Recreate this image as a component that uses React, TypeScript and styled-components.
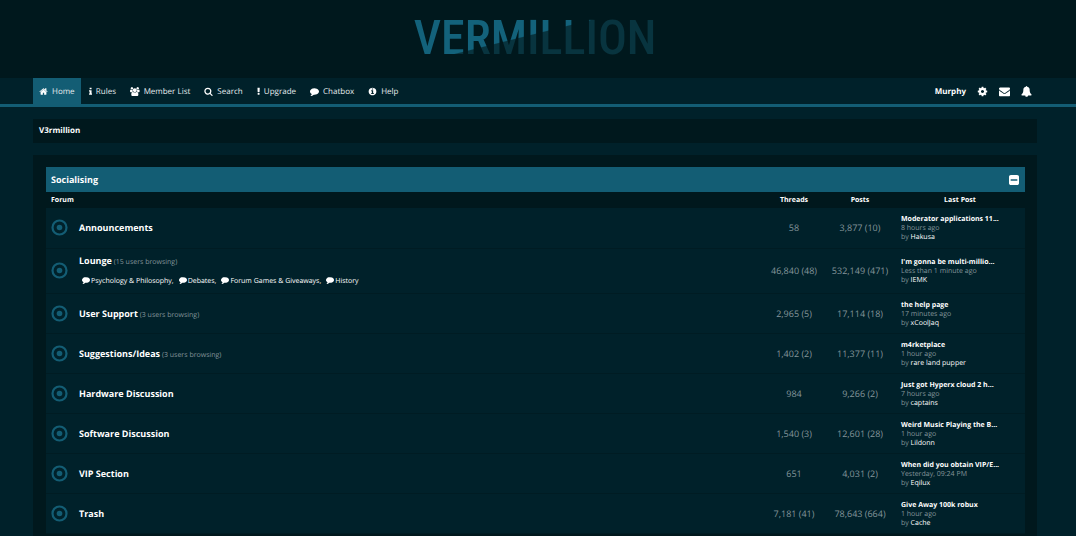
import React from "react";
import styled, { createGlobalStyle } from "styled-components";

const color = {
  page: "#00212a",
  dark: "#00181d",
  accent: "#135d74",
  divider: "#001c23",
  text: "#ffffff",
  nav: "#e6ecee",
  muted: "#84959a",
};

const GlobalStyle = createGlobalStyle`
  * { box-sizing: border-box; }
  body {
    margin: 0;
    background: ${color.page};
    color: ${color.text};
    font-family: "Open Sans", "Noto Sans", sans-serif;
    font-size: 9px;
    text-rendering: geometricPrecision;
  }
  a { color: inherit; text-decoration: none; }
`;

const paths = {
  home: "M1472 992v480q0 26-19 45t-45 19h-384v-384h-256v384h-384q-26 0-45-19t-19-45v-480q0-1 .5-3t.5-3l575-474 575 474q1 2 1 6zm223-69l-62 74q-8 9-21 11h-3q-13 0-21-7l-692-577-692 577q-12 8-24 7-13-2-21-11l-62-74q-8-10-7-23.5t11-21.5l719-599q32-26 76-26t76 26l244 204v-195q0-14 9-23t23-9h192q14 0 23 9t9 23v408l219 182q10 8 11 21.5t-7 23.5z",
  info: "M1216 1344v128q0 26-19 45t-45 19h-512q-26 0-45-19t-19-45v-128q0-26 19-45t45-19h64v-384h-64q-26 0-45-19t-19-45v-128q0-26 19-45t45-19h384q26 0 45 19t19 45v576h64q26 0 45 19t19 45zm-128-1152v192q0 26-19 45t-45 19h-256q-26 0-45-19t-19-45v-192q0-26 19-45t45-19h256q26 0 45 19t19 45z",
  users: "M529 896q-162 5-265 128h-134q-82 0-138-40.5t-56-118.5q0-353 124-353 6 0 43.5 21t97.5 42.5 119 21.5q67 0 133-23-5 37-5 66 0 139 81 256zm1071 637q0 120-73 189.5t-194 69.5h-874q-121 0-194-69.5t-73-189.5q0-53 3.5-103.5t14-109 26.5-108.5 43-97.5 62-81 85.5-53.5 111.5-20q10 0 43 21.5t73 48 107 48 135 21.5 135-21.5 107-48 73-48 43-21.5q61 0 111.5 20t85.5 53.5 62 81 43 97.5 26.5 108.5 14 109 3.5 103.5zm-1024-1277q0 106-75 181t-181 75-181-75-75-181 75-181 181-75 181 75 75 181zm704 384q0 159-112.5 271.5t-271.5 112.5-271.5-112.5-112.5-271.5 112.5-271.5 271.5-112.5 271.5 112.5 112.5 271.5zm576 225q0 78-56 118.5t-138 40.5h-134q-103-123-265-128 81-117 81-256 0-29-5-66 66 23 133 23 59 0 119-21.5t97.5-42.5 43.5-21q124 0 124 353zm-128-609q0 106-75 181t-181 75-181-75-75-181 75-181 181-75 181 75 75 181z",
  search: "M1216 832q0-185-131.5-316.5t-316.5-131.5-316.5 131.5-131.5 316.5 131.5 316.5 316.5 131.5 316.5-131.5 131.5-316.5zm512 832q0 52-38 90t-90 38q-54 0-90-38l-343-342q-179 124-399 124-143 0-273.5-55.5t-225-150-150-225-55.5-273.5 55.5-273.5 150-225 225-150 273.5-55.5 273.5 55.5 225 150 150 225 55.5 273.5q0 220-124 399l343 343q37 37 37 90z",
  exclamation: "M1088 1248v224q0 26-19 45t-45 19h-256q-26 0-45-19t-19-45v-224q0-26 19-45t45-19h256q26 0 45 19t19 45zm30-1056l-28 768q-1 26-20.5 45t-45.5 19h-256q-26 0-45.5-19t-20.5-45l-28-768q-1-26 17.5-45t44.5-19h320q26 0 44.5 19t17.5 45z",
  comment: "M1792 896q0 174-120 321.5t-326 233-450 85.5q-70 0-145-8-198 175-460 242-49 14-114 22-17 2-30.5-9t-17.5-29v-1q-3-4-.5-12t2-10 4.5-9.5l6-9 7-8.5 8-9q7-8 31-34.5t34.5-38 31-39.5 32.5-51 27-59 26-76q-157-89-247.5-220t-90.5-281q0-130 71-248.5t191-204.5 286-136.5 348-50.5q244 0 450 85.5t326 233 120 321.5z",
  infoCircle: "M1152 1376v-160q0-14-9-23t-23-9h-96v-512q0-14-9-23t-23-9h-320q-14 0-23 9t-9 23v160q0 14 9 23t23 9h96v320h-96q-14 0-23 9t-9 23v160q0 14 9 23t23 9h448q14 0 23-9t9-23zm-128-896v-160q0-14-9-23t-23-9h-192q-14 0-23 9t-9 23v160q0 14 9 23t23 9h192q14 0 23-9t9-23zm640 416q0 209-103 385.5t-279.5 279.5-385.5 103-385.5-103-279.5-279.5-103-385.5 103-385.5 279.5-279.5 385.5-103 385.5 103 279.5 279.5 103 385.5z",
  cog: "M1152 896q0-106-75-181t-181-75-181 75-75 181 75 181 181 75 181-75 75-181zm512-109v222q0 12-8 23t-20 13l-185 28q-19 54-39 91 35 50 107 138 10 12 10 25t-9 23q-27 37-99 108t-94 71q-12 0-26-9l-138-108q-44 23-91 38-16 136-29 186-7 28-36 28h-222q-14 0-24.5-8.5t-11.5-21.5l-28-184q-49-16-90-37l-141 107q-10 9-25 9-14 0-25-11-126-114-165-168-7-10-7-23 0-12 8-23 15-21 51-66.5t54-70.5q-27-50-41-99l-183-27q-13-2-21-12.5t-8-23.5v-222q0-12 8-23t19-13l186-28q14-46 39-92-40-57-107-138-10-12-10-24 0-10 9-23 26-36 98.5-107.5t94.5-71.5q13 0 26 10l138 107q44-23 91-38 16-136 29-186 7-28 36-28h222q14 0 24.5 8.5t11.5 21.5l28 184q49 16 90 37l142-107q9-9 24-9 13 0 25 10 129 119 165 170 7 8 7 22 0 12-8 23-15 21-51 66.5t-54 70.5q26 50 41 98l183 28q13 2 21 12.5t8 23.5z",
  envelope: "M1792 710v794q0 66-47 113t-113 47h-1472q-66 0-113-47t-47-113v-794q44 49 101 87 362 246 497 345 57 42 92.5 65.5t94.5 48 110 24.5h2q51 0 110-24.5t94.5-48 92.5-65.5q170-123 498-345 57-39 100-87zm0-294q0 79-49 151t-122 123q-376 261-468 325-10 7-42.5 30.5t-54 38-52 32.5-57.5 27-50 9h-2q-23 0-50-9t-57.5-27-52-32.5-54-38-42.5-30.5q-91-64-262-182.5t-205-142.5q-62-42-117-115.5t-55-136.5q0-78 41.5-130t118.5-52h1472q65 0 112.5 47t47.5 113z",
  bell: "M912 1696q0-16-16-16-59 0-101.5-42.5t-42.5-101.5q0-16-16-16t-16 16q0 73 51.5 124.5t124.5 51.5q16 0 16-16zm816-288q0 52-38 90t-90 38h-448q0 106-75 181t-181 75-181-75-75-181h-448q-52 0-90-38t-38-90q50-42 91-88t85-119.5 74.5-158.5 50-206 19.5-260q0-152 117-282.5t307-158.5q-8-19-8-39 0-40 28-68t68-28 68 28 28 68q0 20-8 39 190 28 307 158.5t117 282.5q0 139 19.5 260t50 206 74.5 158.5 85 119.5 91 88z",
  minusSquare: "M1408 960v-128q0-26-19-45t-45-19h-896q-26 0-45 19t-19 45v128q0 26 19 45t45 19h896q26 0 45-19t19-45zm256-544v960q0 119-84.5 203.5t-203.5 84.5h-960q-119 0-203.5-84.5t-84.5-203.5v-960q0-119 84.5-203.5t203.5-84.5h960q119 0 203.5 84.5t84.5 203.5z",
};

type IconName = keyof typeof paths;

const viewBoxes: Partial<Record<IconName, string>> = {
  info: "576 0 640 1792",
  exclamation: "576 0 640 1792",
  users: "-64 0 1920 1792",
  minusSquare: "128 128 1536 1536",
};

const Glyph = styled.svg<{ $size: number }>`
  display: block;
  flex: none;
  height: ${(p) => p.$size}px;
  fill: #fff;
`;

const Icon = ({ name, size = 9 }: { name: IconName; size?: number }) => (
  <Glyph $size={size} viewBox={viewBoxes[name] ?? "0 0 1792 1792"} aria-hidden="true">
    <path d={paths[name]} />
  </Glyph>
);

const Header = styled.header`
  display: flex;
  justify-content: center;
  align-items: center;
  height: 78px;
  padding: 0 39px 2px 33px;
  background: ${color.dark};
`;

const Logo = styled.h1`
  margin: 0;
  font: 500 48px/56px "Roboto Condensed", "Liberation Sans Narrow", "Liberation Sans", sans-serif;
  color: transparent;
  background: linear-gradient(166deg, #13627b 46%, #08343f 47%);
  background-clip: text;
  -webkit-background-clip: text;
`;

const NavBar = styled.nav`
  display: flex;
  justify-content: space-between;
  padding: 0 44px 0 33px;
  border-bottom: 3px solid ${color.accent};
`;

const NavGroup = styled.div<{ $gap: number }>`
  display: flex;
  align-items: center;
  gap: ${(p) => p.$gap}px;
`;

const NavLink = styled.a<{ $active?: boolean }>`
  display: flex;
  align-items: center;
  gap: 4px;
  height: 26px;
  padding: 0 6px;
  color: ${color.nav};
  font-size: 8px;
  background: ${(p) => (p.$active ? color.accent : "transparent")};
`;

const UserLink = styled.a`
  font-size: 8px;
  font-weight: 700;
`;

const IconButton = styled.button`
  display: flex;
  padding: 0;
  border: 0;
  background: none;
  cursor: pointer;
`;

const Content = styled.main`
  display: flex;
  flex-direction: column;
  gap: 12px;
  padding: 12px 39px 0 33px;
`;

const Breadcrumb = styled.div`
  height: 24px;
  padding: 0 6px;
  background: ${color.dark};
  font-size: 8px;
  font-weight: 700;
  line-height: 24px;
`;

const Panel = styled.section`
  padding: 12px 12px 12px 13px;
  background: ${color.dark};
`;

const CategoryBar = styled.div`
  display: flex;
  align-items: center;
  justify-content: space-between;
  height: 25px;
  padding: 0 6px 0 5px;
  background: ${color.accent};
`;

const CategoryTitle = styled.h2`
  margin: 0;
  font-size: 9px;
  font-weight: 700;
`;

const ForumTable = styled.table`
  width: 100%;
  table-layout: fixed;
  border-collapse: collapse;
`;

const Col = styled.col<{ $width?: number }>`
  width: ${(p) => (p.$width ? `${p.$width}px` : "auto")};
`;

const HeadCell = styled.th<{ $left?: boolean }>`
  padding: 2px 5px 0;
  font-size: 7px;
  line-height: 14px;
  text-align: ${(p) => (p.$left ? "left" : "center")};
`;

const Row = styled.tr<{ $tall: boolean }>`
  height: ${(p) => (p.$tall ? 45 : 40)}px;
  background: ${color.page};
  border-bottom: 1px solid ${color.divider};
`;

const Cell = styled.td`
  padding: 0 5px;
`;

const CountCell = styled.td`
  padding: 0;
  color: ${color.muted};
  font-size: 9px;
  text-align: center;
  white-space: nowrap;
`;

const LastPostCell = styled.td`
  padding: 2px 6px 0;
  color: ${color.muted};
  font-size: 7px;
  line-height: 9px;
  white-space: nowrap;
`;

const PostTitle = styled.a`
  display: block;
  color: ${color.text};
  font-weight: 700;
`;

const PostAuthor = styled.a`
  color: ${color.text};
`;

const ForumName = styled.a`
  font-size: 9px;
  font-weight: 700;
`;

const Browsing = styled.span`
  color: ${color.muted};
  font-size: 7px;
`;

const SubForums = styled.div`
  display: flex;
  gap: 5px;
  padding: 9px 3px 0;
  font-size: 7px;
  line-height: 12px;
`;

const SubForum = styled.span`
  display: flex;
  align-items: flex-start;
  gap: 1px;
`;

const StatusIcon = styled.svg`
  display: block;
  width: 17px;
  height: 17px;
`;

const navItems: { icon: IconName; label: string }[] = [
  { icon: "home", label: "Home" },
  { icon: "info", label: "Rules" },
  { icon: "users", label: "Member List" },
  { icon: "search", label: "Search" },
  { icon: "exclamation", label: "Upgrade" },
  { icon: "comment", label: "Chatbox" },
  { icon: "infoCircle", label: "Help" },
];

interface Forum {
  name: string;
  browsing?: number;
  subs?: string[];
  threads: string;
  posts: string;
  last: [title: string, time: string, author: string];
}

const forums: Forum[] = [
  { name: "Announcements", threads: "58", posts: "3,877 (10)", last: ["Moderator applications 11...", "8 hours ago", "Hakusa"] },
  {
    name: "Lounge",
    browsing: 15,
    subs: ["Psychology & Philosophy", "Debates", "Forum Games & Giveaways", "History"],
    threads: "46,840 (48)",
    posts: "532,149 (471)",
    last: ["I'm gonna be multi-millio...", "Less than 1 minute ago", "IEMK"],
  },
  { name: "User Support", browsing: 3, threads: "2,965 (5)", posts: "17,114 (18)", last: ["the help page", "17 minutes ago", "xCoolJaq"] },
  { name: "Suggestions/Ideas", browsing: 3, threads: "1,402 (2)", posts: "11,377 (11)", last: ["m4rketplace", "1 hour ago", "rare land pupper"] },
  { name: "Hardware Discussion", threads: "984", posts: "9,266 (2)", last: ["Just got Hyperx cloud 2 h...", "7 hours ago", "captains"] },
  { name: "Software Discussion", threads: "1,540 (3)", posts: "12,601 (28)", last: ["Weird Music Playing the B...", "1 hour ago", "Lildonn"] },
  { name: "VIP Section", threads: "651", posts: "4,031 (2)", last: ["When did you obtain VIP/E...", "Yesterday, 09:24 PM", "Eqilux"] },
  { name: "Trash", threads: "7,181 (41)", posts: "78,643 (664)", last: ["Give Away 100k robux", "1 hour ago", "Cache"] },
];

const ForumRow = ({ forum }: { forum: Forum }) => (
  <Row $tall={Boolean(forum.subs)}>
    <Cell>
      <StatusIcon viewBox="0 0 17 17" aria-hidden="true">
        <circle cx="8.5" cy="8.5" r="7" fill="none" stroke={color.accent} strokeWidth="2.2" />
        <circle cx="8.5" cy="8.5" r="2.8" fill={color.accent} />
      </StatusIcon>
    </Cell>
    <Cell>
      <ForumName href="#">{forum.name}</ForumName>
      {forum.browsing && <Browsing> ({forum.browsing} users browsing)</Browsing>}
      {forum.subs && (
        <SubForums>
          {forum.subs.map((sub, i) => (
            <SubForum key={sub}>
              <Icon name="comment" size={8} />
              <span>
                <a href="#">{sub}</a>
                {i < forum.subs!.length - 1 && ","}
              </span>
            </SubForum>
          ))}
        </SubForums>
      )}
    </Cell>
    <CountCell>{forum.threads}</CountCell>
    <CountCell>{forum.posts}</CountCell>
    <LastPostCell>
      <PostTitle href="#">{forum.last[0]}</PostTitle>
      {forum.last[1]}
      <br />
      by <PostAuthor href="#">{forum.last[2]}</PostAuthor>
    </LastPostCell>
  </Row>
);

export default function App() {
  return (
    <>
      <GlobalStyle />
      <Header>
        <Logo>VERMILLION</Logo>
      </Header>
      <NavBar>
        <NavGroup $gap={2}>
          {navItems.map((item, i) => (
            <NavLink key={item.label} href="#" $active={i === 0}>
              <Icon name={item.icon} />
              {item.label}
            </NavLink>
          ))}
        </NavGroup>
        <NavGroup $gap={11}>
          <UserLink href="#">Murphy</UserLink>
          <IconButton aria-label="Settings">
            <Icon name="cog" size={11} />
          </IconButton>
          <IconButton aria-label="Messages">
            <Icon name="envelope" size={11} />
          </IconButton>
          <IconButton aria-label="Alerts">
            <Icon name="bell" size={11} />
          </IconButton>
        </NavGroup>
      </NavBar>
      <Content>
        <Breadcrumb>
          <a href="#">V3rmillion</a>
        </Breadcrumb>
        <Panel>
          <CategoryBar>
            <CategoryTitle>
              <a href="#">Socialising</a>
            </CategoryTitle>
            <IconButton aria-label="Collapse">
              <Icon name="minusSquare" size={10} />
            </IconButton>
          </CategoryBar>
          <ForumTable>
            <colgroup>
              <Col $width={28} />
              <Col />
              <Col $width={62} />
              <Col $width={70} />
              <Col $width={130} />
            </colgroup>
            <thead>
              <tr>
                <HeadCell colSpan={2} $left>
                  Forum
                </HeadCell>
                <HeadCell>Threads</HeadCell>
                <HeadCell>Posts</HeadCell>
                <HeadCell>Last Post</HeadCell>
              </tr>
            </thead>
            <tbody>
              {forums.map((forum) => (
                <ForumRow key={forum.name} forum={forum} />
              ))}
            </tbody>
          </ForumTable>
        </Panel>
      </Content>
    </>
  );
}
